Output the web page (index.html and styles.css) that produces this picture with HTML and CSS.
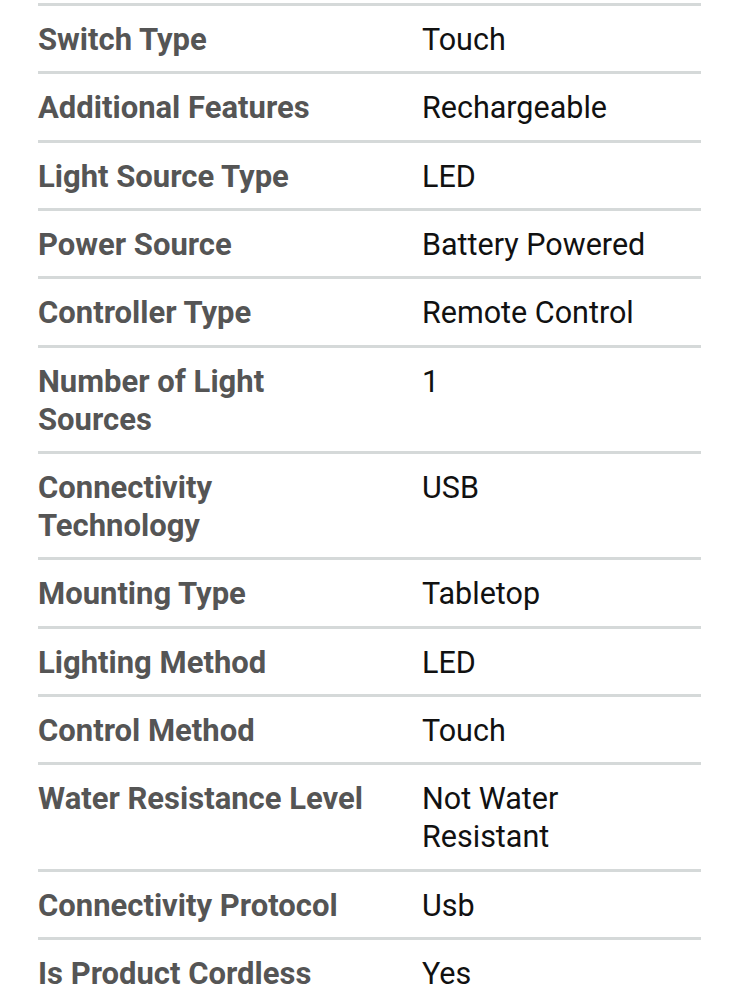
FILE: index.html
```html
<!DOCTYPE html>
<html lang="en">
<head>
<meta charset="utf-8">
<title>Product details</title>
<link rel="stylesheet" href="styles.css">
</head>
<body>
<div class="specs">
  <div class="row"><div class="label">Switch Type</div><div class="value">Touch</div></div>
  <div class="row"><div class="label">Additional Features</div><div class="value">Rechargeable</div></div>
  <div class="row"><div class="label">Light Source Type</div><div class="value">LED</div></div>
  <div class="row"><div class="label">Power Source</div><div class="value">Battery Powered</div></div>
  <div class="row"><div class="label">Controller Type</div><div class="value">Remote Control</div></div>
  <div class="row"><div class="label">Number of Light Sources</div><div class="value">1</div></div>
  <div class="row"><div class="label">Connectivity Technology</div><div class="value">USB</div></div>
  <div class="row"><div class="label">Mounting Type</div><div class="value">Tabletop</div></div>
  <div class="row"><div class="label">Lighting Method</div><div class="value">LED</div></div>
  <div class="row"><div class="label">Control Method</div><div class="value">Touch</div></div>
  <div class="row"><div class="label">Water Resistance Level</div><div class="value">Not Water Resistant</div></div>
  <div class="row"><div class="label">Connectivity Protocol</div><div class="value">Usb</div></div>
  <div class="row"><div class="label">Is Product Cordless</div><div class="value">Yes</div></div>
</div>
</body>
</html>
```
FILE: styles.css
```css
html, body {
  margin: 0;
  padding: 0;
  background: #ffffff;
}
body {
  font-family: Roboto, "Liberation Sans", sans-serif;
  line-height: 38px;
}
.specs {
  margin: 3px 28px 0 38px;
  display: flex;
  flex-direction: column;
}
.row {
  display: grid;
  grid-template-columns: 384px 240px;
  border-top: 3px solid #d5d9d9;
  padding: 15px 0 12.33px;
}
.label {
  font-size: 31px;
  font-weight: 700;
  color: #555555;
  padding-right: 52px;
}
.value {
  font-size: 30.5px;
  color: #111111;
  font-weight: 400;
}
```
